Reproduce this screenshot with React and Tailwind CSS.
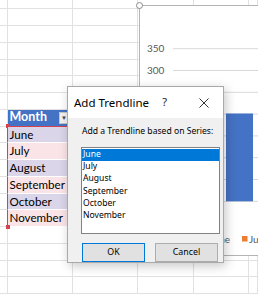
import React from "react";

const months = ["June", "July", "August", "September", "October", "November"];
const rowCount = 18;

// widths of the sheet columns (A..F)
const colW = ["w-[8px]", "w-[65px]", "w-[65px]", "w-[56px]", "w-[55px]", "flex-1"];

const Cell = ({ i, className = "", children }) => (
  <div className={`${colW[i]} h-full shrink-0 border-r border-b border-[#e1e1e1] ${className}`}>
    {children}
  </div>
);

const SheetRow = ({ r }) => {
  const h = r === 0 ? "h-[9.3px]" : "h-[16.75px]";
  const m = r - 8;
  const inTable = m >= 0 && m < months.length;
  return (
    <div className={`flex ${h}`}>
      <Cell i={0} className={inTable ? "!border-r-[#d2424f]" : ""} />
      {r === 7 ? (
        <Cell i={1} className="relative !border-b-[#d2424f] bg-[#4472c4] flex items-center">
          <span className="pl-[1.5px] text-[12.5px] font-bold text-white leading-none">Month</span>
          <span className="ml-auto mr-[3px] w-[10px] h-[12px] bg-[#f2f2f2] border border-[#c6c6c6] flex items-center justify-center text-[6px] text-[#444]">
            ▼
          </span>
          <span className="absolute left-[-2.5px] bottom-[-2.5px] w-[4px] h-[4px] bg-[#d2424f]" />
        </Cell>
      ) : inTable ? (
        <Cell
          i={1}
          className={`relative flex items-center !border-b-white ${m % 2 === 0 ? "bg-[#dad5e9]" : "bg-[#fae4e7]"} ${
            m === months.length - 1 ? "!border-b-[#d2424f]" : ""
          }`}
        >
          <span className="pl-[1.5px] text-[11.6px] text-black leading-none">{months[m]}</span>
          {m === months.length - 1 && (
            <span className="absolute left-[-2.5px] bottom-[-2.5px] w-[4px] h-[4px] bg-[#d2424f]" />
          )}
        </Cell>
      ) : (
        <Cell i={1} />
      )}
      <Cell i={2} />
      <Cell i={3} />
      <Cell i={4} />
      <Cell i={5} />
    </div>
  );
};

const Chart = () => {
  const grid = [42.7, 64.5, 86.3, 108.1, 129.9, 151.7, 173.5, 195.3];
  return (
    <div className="absolute left-[139px] top-[5px] w-[140px] h-[251px] bg-white border border-[#b4b4b4]">
      <svg width="140" height="250" className="block" style={{ fontFamily: "Lato, sans-serif" }}>
        {grid.map((y) => (
          <line key={y} x1="33" x2="140" y1={y} y2={y} stroke="#d9d9d9" strokeWidth="1" />
        ))}
        <text x="7" y={42.7 + 3.5} fontSize="10" fill="#595959">350</text>
        <text x="7" y={64.5 + 3.5} fontSize="10" fill="#595959">300</text>
        <rect x="86" y="107.5" width="27" height="87.8" fill="#4472c4" />
        <rect x="70" y="230" width="5" height="5" fill="#4472c4" />
        <text x="90" y="236.5" fontSize="10" fill="#595959" textAnchor="end">June</text>
        <rect x="102" y="230" width="5.5" height="5.5" fill="#ed7d31" />
        <text x="109" y="236.5" fontSize="10" fill="#595959">July</text>
      </svg>
    </div>
  );
};

const Dialog = () => (
  <div
    className="absolute left-[67px] top-[86px] w-[157px] h-[177px] bg-[#f0f0f0] border border-[#a9a9a9] shadow-[2px_3px_10px_rgba(0,0,0,0.22)] flex flex-col"
    style={{ fontFamily: "'Noto Sans', sans-serif" }}
  >
    <div className="h-[31px] bg-white flex items-center shrink-0">
      <span className="pl-[6px] text-[11.5px] text-black">Add Trendline</span>
      <span className="ml-auto mr-[32px] text-[11px] text-[#222]">?</span>
      <svg width="10" height="10" className="mr-[14px]">
        <path d="M0.5 0.5 L9.5 9.5 M9.5 0.5 L0.5 9.5" stroke="#333" strokeWidth="1" />
      </svg>
    </div>
    <div className="flex flex-col pl-[13px] pt-[7px]">
      <div className="h-[12px] pl-[1px] flex items-center text-[8.6px] text-black whitespace-nowrap">
        Add a Trendline based on Series:
      </div>
      <div className="mt-[10px] w-[139px] h-[87px] bg-white border border-[#828282] pt-[0.5px]">
        {months.map((m, i) => (
          <div
            key={m}
            className={`h-[12.1px] pl-[1px] flex items-center text-[8.6px] leading-none ${
              i === 0 ? "bg-[#0078d7] text-white" : "text-black"
            }`}
          >
            {m}
          </div>
        ))}
      </div>
      <div className="mt-[9px] flex gap-[10px] pl-[1px]">
        <button className="w-[63px] h-[19px] bg-[#e1e1e1] border border-[#0078d7] text-[8.8px] text-black">
          OK
        </button>
        <button className="w-[63px] h-[19px] bg-[#e1e1e1] border border-[#adadad] text-[8.8px] text-black">
          Cancel
        </button>
      </div>
    </div>
  </div>
);

export default function App() {
  return (
    <div className="relative w-[258px] h-[304px] overflow-hidden bg-white" style={{ fontFamily: "Lato, sans-serif" }}>
      <div className="flex flex-col">
        {Array.from({ length: rowCount }, (_, r) => (
          <SheetRow key={r} r={r} />
        ))}
      </div>
      <Chart />
      <span className="absolute left-[135.5px] top-[1.5px] w-[7px] h-[7px] rounded-full bg-white border border-[#8a8a8a]" />
      <Dialog />
    </div>
  );
}
